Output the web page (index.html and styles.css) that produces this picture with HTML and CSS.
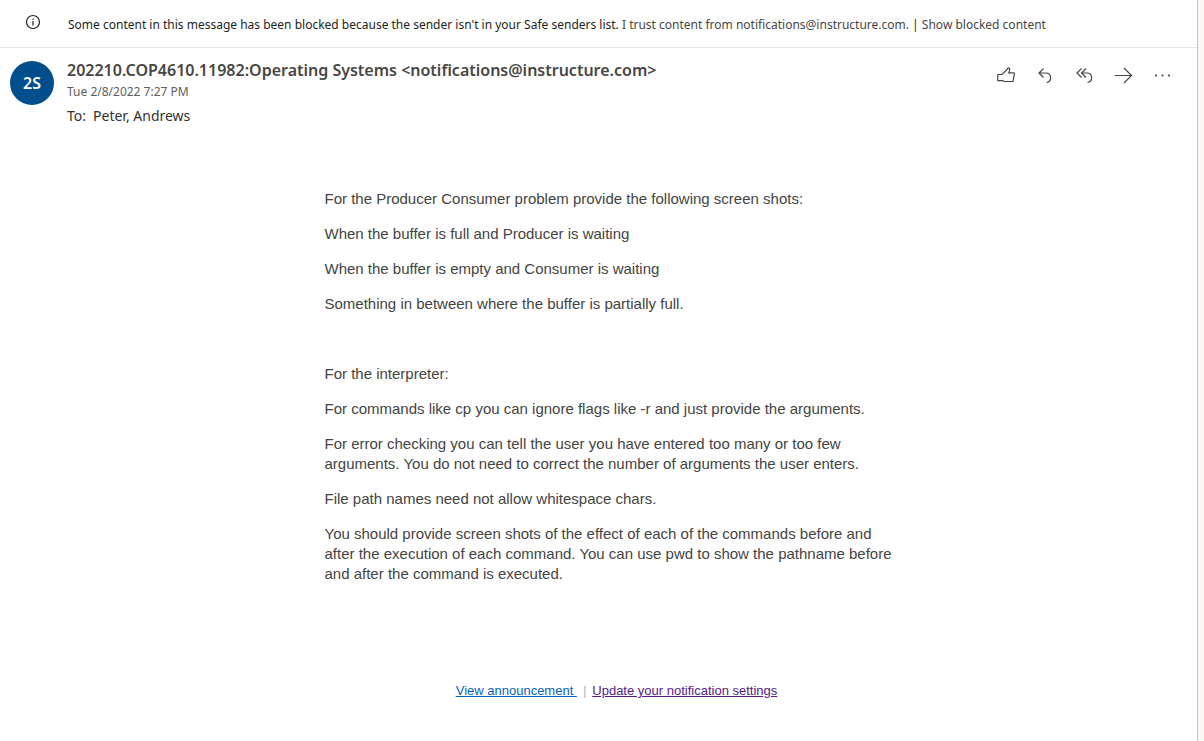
FILE: index.html
```
<!DOCTYPE html>
<html lang="en">
<head>
<meta charset="utf-8">
<title>Operating Systems - Mail</title>
<link rel="stylesheet" href="styles.css">
</head>
<body>
<main class="pane">
  <div class="notice">
    <svg class="notice-icon" viewBox="0 0 16 16" aria-hidden="true"><circle cx="8" cy="8" r="6.5"/><path d="M8 7v4.5M8 4.500v1.200"/></svg>
    <p class="notice-text">Some content in this message has been blocked because the sender isn't in your Safe senders list. <a href="#trust">I trust content from notifications@instructure.com.</a> | <a href="#show">Show blocked content</a></p>
  </div>
  <header class="message-head">
    <div class="avatar">2S</div>
    <div class="details">
      <h1 class="sender">202210.COP4610.11982:Operating Systems &lt;notifications@instructure.com&gt;</h1>
      <p class="date">Tue 2/8/2022 7:27 PM</p>
      <p class="recipients"><span>To:</span><span>Peter, Andrews</span></p>
    </div>
    <div class="actions">
      <button type="button" aria-label="Like"><svg viewBox="0 0 20 20"><path d="M0.800 8.500H5L10.500 3V2.500Q11.500 1.300 12.500 2.500Q13.200 4 11.800 6.800H16.500Q17.700 6.800 17.400 8L16 15.500H7.500L5.500 14.700H0.800Z"/></svg></button>
      <button type="button" aria-label="Reply"><svg viewBox="0 0 20 20"><path d="M7.500 2.500L3 7L7.500 11.500M3 7H10.500A4.800 4.800 0 0 1 10.500 16.500"/></svg></button>
      <button type="button" aria-label="Reply all"><svg viewBox="0 0 20 20"><path d="M6.500 2.500L2 7L6.500 11.500M11 2.500L6.500 7L11 11.500M6.500 7H12.500A4.800 4.800 0 0 1 12.500 16.500"/></svg></button>
      <button type="button" aria-label="Forward"><svg viewBox="0 0 20 20"><path d="M1 9.500H17.500M10 2L17.500 9.500L10 17"/></svg></button>
      <button type="button" aria-label="More actions"><svg viewBox="0 0 20 20"><g class="dots"><circle cx="3" cy="9.500" r="1.100"/><circle cx="9.500" cy="9.500" r="1.100"/><circle cx="16" cy="9.500" r="1.100"/></g></svg></button>
    </div>
  </header>
  <article class="message">
    <p>For the Producer Consumer problem provide the following screen shots:</p>
    <p>When the buffer is full and Producer is waiting</p>
    <p>When the buffer is empty and Consumer is waiting</p>
    <p>Something in between where the buffer is partially full.</p>
    <p>&nbsp;</p>
    <p>For the interpreter:</p>
    <p>For commands like cp you can ignore flags like -r and just provide the arguments.</p>
    <p>For error checking you can tell the user you have entered too many or too few arguments. You do not need to correct the number of arguments the user enters.</p>
    <p>File path names need not allow whitespace chars.</p>
    <p>You should provide screen shots of the effect of each of the commands before and after the execution of each command. You can use pwd to show the pathname before and after the command is executed.</p>
  </article>
  <footer class="links">
    <a class="view" href="#announcement">View announcement&nbsp;</a>
    <span class="divider">|</span>
    <a class="settings" href="#settings">Update your notification settings</a>
  </footer>
</main>
</body>
</html>
```
FILE: styles.css
```
* { box-sizing: border-box; }

body {
  margin: 0;
  padding-right: 6px;
  background: #faf9f8;
  font-family: "Noto Sans", sans-serif;
  color: #323130;
}

p, h1 { margin: 0; }

.pane {
  min-height: 100vh;
  background: #fff;
  border-right: 1px solid #c8c6c4;
}

.notice {
  display: flex;
  align-items: center;
  gap: 27px;
  min-height: 48px;
  padding: 0 25px;
  border-bottom: 1px solid #e6e6e6;
}

.notice-icon {
  flex: none;
  width: 16px;
  height: 16px;
  margin-bottom: 4px;
  fill: none;
  stroke: #201f1e;
  stroke-width: 1.2;
}

.notice-text {
  padding-top: 2px;
  font-size: 12px;
  line-height: 16px;
  color: #201f1e;
}

.notice-text a {
  color: #484644;
  text-decoration: none;
}

.message-head {
  display: flex;
  align-items: flex-start;
  padding: 12px 24px 0 10px;
}

.avatar {
  display: grid;
  place-items: center;
  flex: none;
  width: 44px;
  height: 44px;
  margin: 1px 13px 0 0;
  border-radius: 50%;
  background: #004e8c;
  color: #fff;
  font-size: 16px;
  font-weight: 600;
}

.details { flex: 1; }

.sender {
  font-size: 16px;
  line-height: 20px;
  font-weight: 600;
  color: #484644;
}

.date {
  font-size: 12px;
  line-height: 24px;
  color: #605e5c;
}

.recipients {
  display: flex;
  gap: 7px;
  font-size: 14px;
  line-height: 24px;
}

.actions {
  display: flex;
  gap: 19px;
  padding-top: 6px;
}

.actions button {
  width: 20px;
  height: 20px;
  padding: 0;
  border: 0;
  background: none;
}

.actions svg {
  display: block;
  fill: none;
  stroke: #484644;
  stroke-width: 1.2;
}

.actions .dots {
  fill: #484644;
  stroke: none;
}

.message {
  display: grid;
  gap: 15px;
  max-width: 600px;
  margin: 0 auto;
  padding: 61px 0 0 26px;
  font-family: "Liberation Sans", Arial, sans-serif;
  font-size: 15px;
  line-height: 20px;
  color: #444;
}

.links {
  display: flex;
  justify-content: center;
  gap: 6px;
  padding: 98px 0 32px 36px;
  font-family: "Liberation Sans", Arial, sans-serif;
  font-size: 13px;
  line-height: 18px;
}

.view { color: #0563c1; }
.settings { color: #551a8b; }
.divider { color: #adb5c4; }
```
